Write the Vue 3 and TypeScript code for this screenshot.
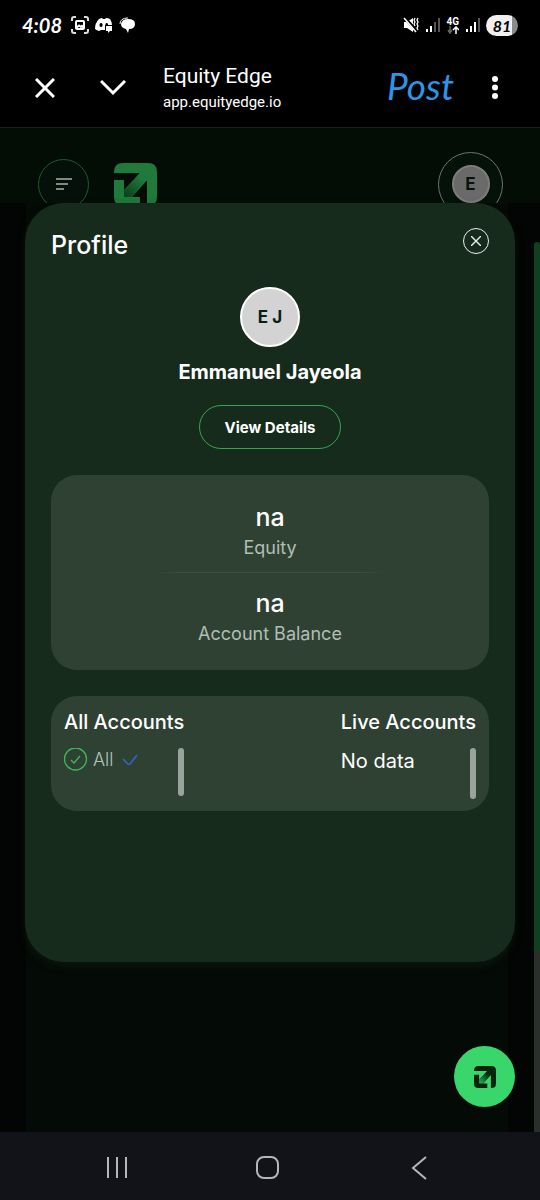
<script setup lang="ts">
interface Stat {
  value: string
  label: string
}

const stats: Stat[] = [
  { value: 'na', label: 'Equity' },
  { value: 'na', label: 'Account Balance' },
]

const logoPath =
  'M0 10V9Q0 0 9 0H34Q43 0 43 9V34Q43 43 34 43H33V17L18 34H26V43H9Q0 43 0 34V17H10V27L26 10Z'
</script>

<template>
  <div class="screen">
    <div class="status">
      <div class="status-group">
        <span class="time">4:08</span>
        <svg width="18" height="18" viewBox="0 0 18 18" fill="none" stroke="#fff" stroke-width="2">
          <path d="M1 5V3Q1 1 3 1H5M13 1H15Q17 1 17 3V5M17 13V15Q17 17 15 17H13M5 17H3Q1 17 1 15V13" stroke="#ddd" />
          <rect x="5" y="5" width="8" height="8" rx="1" />
          <path d="M5 12L8 9.500L10 11L11 10L13 12" />
        </svg>
        <svg width="18" height="16" viewBox="0 0 18 16">
          <path
            fill="#fff"
            d="M4 2Q6 1 7 1L8 2H10L11 1Q13 1 15 2Q17 5 17 8H10V13H6L4 14Q1 13 0 12Q0 6 4 2ZM6 6A1.6 2 0 1 0 6.1 10A1.6 2 0 1 0 6 6ZM11.500 6A1.500 1.500 0 0 0 10.500 8H13A1.500 1.500 0 0 0 11.500 6Z"
          />
          <path fill="#fff" d="M11 9H17V14H15L13 16V14H11Z" />
        </svg>
        <svg width="17" height="16" viewBox="0 0 17 16">
          <path d="M1 7Q1 1 9 1" fill="none" stroke="#fff" stroke-width="1" />
          <path fill="#fff" d="M9 2Q16 2 16 7Q16 12 10 12L9 16L7 12Q2 11 2 7Q3 2 9 2Z" />
        </svg>
      </div>
      <div class="status-group right">
        <svg width="16" height="16" viewBox="0 0 16 16">
          <path d="M1 5H4L10 1V15L4 11H1Z" fill="#fff" />
          <path d="M1 0L14 14" stroke="#000" stroke-width="3" />
          <path d="M1 1L13 15" stroke="#fff" stroke-width="1.500" />
          <path d="M12 1L11 3L12 5L11 7L12 9M15 1L14 3L15 5L14 7L15 9L14 11L15 13" fill="none" stroke="#fff" stroke-width="1.300" />
        </svg>
        <svg width="15" height="16" viewBox="0 0 15 16">
          <path d="M2 12V15M6 9V15" stroke="#fff" stroke-width="2" />
          <path d="M10 5V15M14 1V15" stroke="#555" stroke-width="2" />
        </svg>
        <div class="net">
          <span>4G</span>
          <svg width="12" height="8" viewBox="0 0 12 8" fill="none" stroke-width="1.500">
            <path d="M3 0V7M1 4L3 7L5 4" stroke="#666" />
            <path d="M9 8V1M6 4L9 1L12 4" stroke="#fff" />
          </svg>
        </div>
        <svg width="15" height="16" viewBox="0 0 15 16">
          <path d="M2 12V15M6 9V15M10 5V15" stroke="#fff" stroke-width="2" />
          <path d="M14 1V15" stroke="#555" stroke-width="2" />
        </svg>
        <span class="battery">81</span>
      </div>
    </div>

    <header class="chrome">
      <button class="icon-btn" aria-label="Close">
        <svg width="20" height="20" viewBox="0 0 20 20" fill="none" stroke="#fff" stroke-width="3">
          <path d="M1 1L19 19M19 1L1 19" />
        </svg>
      </button>
      <button class="icon-btn chevron" aria-label="Minimise">
        <svg width="26" height="16" viewBox="0 0 26 16" fill="none" stroke="#fff" stroke-width="3">
          <path d="M1 1L13 13L25 1" />
        </svg>
      </button>
      <div class="site">
        <span class="site-name">Equity Edge</span>
        <span class="site-url">app.equityedge.io</span>
      </div>
      <button class="post">Post</button>
      <button class="icon-btn more" aria-label="More options">
        <svg width="6" height="24" viewBox="0 0 6 24" fill="#fff">
          <circle cx="3" cy="3" r="3" />
          <circle cx="3" cy="11.500" r="3" />
          <circle cx="3" cy="20" r="3" />
        </svg>
      </button>
    </header>

    <main class="page">
      <div class="topbar">
        <button class="menu" aria-label="Menu">
          <svg width="16" height="12" viewBox="0 0 16 12" stroke="#7f8a81" stroke-width="2">
            <path d="M0 1H16M0 6H12M0 11H8" />
          </svg>
        </button>
        <svg class="logo" width="43" height="43" viewBox="0 0 43 43">
          <defs>
            <linearGradient id="lg" gradientUnits="userSpaceOnUse" x1="10" y1="34" x2="28" y2="15">
              <stop offset="0" stop-color="#0c3c1b" />
              <stop offset="1" stop-color="#1f7a3b" />
            </linearGradient>
          </defs>
          <path :d="logoPath" fill="#1f7a3b" />
          <path d="M10 27L26 10L33 17L18 34H10Z" fill="url(#lg)" />
        </svg>
        <div class="account-ring"><span>E</span></div>
      </div>
      <div class="column"></div>
      <div class="scroll"></div>

      <section class="modal" role="dialog" aria-label="Profile">
        <div class="modal-head">
          <h1>Profile</h1>
          <button class="close" aria-label="Close profile">
            <svg width="10" height="10" viewBox="0 0 10 10" stroke="#e8f0ea" stroke-width="1.400">
              <path d="M0 0L10 10M10 0L0 10" />
            </svg>
          </button>
        </div>

        <div class="avatar">E J</div>
        <h2>Emmanuel Jayeola</h2>
        <button class="details">View Details</button>

        <div class="card stats">
          <div v-for="s in stats" :key="s.label" class="stat">
            <strong>{{ s.value }}</strong>
            <span>{{ s.label }}</span>
          </div>
        </div>

        <div class="card accounts">
          <div>
            <h3>All Accounts</h3>
            <div class="list">
              <span class="item">
                <svg width="24" height="24" viewBox="0 0 24 24" fill="none" stroke="#40b65c" stroke-width="1.300">
                  <circle cx="11.500" cy="11" r="11" />
                  <path d="M7 12L10 15L16 8" />
                </svg>
                All
                <svg class="tick" width="16" height="12" viewBox="0 0 16 12" fill="none" stroke="#2c68c4" stroke-width="1.600">
                  <path d="M1 5L6 10Q7 11 8 10L15 1" />
                </svg>
              </span>
              <i class="thumb"></i>
            </div>
          </div>
          <div>
            <h3>Live Accounts</h3>
            <div class="list tall">
              <span class="empty">No data</span>
              <i class="thumb"></i>
            </div>
          </div>
        </div>
      </section>

      <button class="fab" aria-label="Equity Edge assistant">
        <svg width="22" height="22" viewBox="0 0 43 43">
          <defs>
            <linearGradient id="fg" gradientUnits="userSpaceOnUse" x1="10" y1="34" x2="28" y2="15">
              <stop offset="0" stop-color="#2cb457" />
              <stop offset="1" stop-color="#06250e" />
            </linearGradient>
          </defs>
          <path :d="logoPath" fill="#06250e" />
          <path d="M10 27L26 10L33 17L18 34H10Z" fill="url(#fg)" />
        </svg>
      </button>
    </main>

    <nav class="nav">
      <button aria-label="Recent apps">
        <svg width="24" height="24" viewBox="0 0 24 24" stroke="#b6b6ba" stroke-width="2">
          <path d="M4 1V22M13 1V22M22 1V22" />
        </svg>
      </button>
      <button aria-label="Home">
        <svg width="24" height="24" viewBox="0 0 24 24" fill="none" stroke="#b6b6ba" stroke-width="2">
          <rect x="1" y="1" width="21" height="21" rx="7" />
        </svg>
      </button>
      <button aria-label="Back">
        <svg width="24" height="24" viewBox="0 0 24 24" fill="none" stroke="#b6b6ba" stroke-width="2">
          <path d="M19 1L6 12L19 23" />
        </svg>
      </button>
    </nav>
  </div>
</template>

<style>
body {
  margin: 0;
  background: #000;
}
</style>

<style scoped>
* {
  box-sizing: border-box;
}
.screen {
  display: flex;
  flex-direction: column;
  min-height: 100vh;
  background: #000;
  color: #fff;
  font-family: Inter, 'Liberation Sans', sans-serif;
}
button {
  padding: 0;
  border: 0;
  background: none;
  color: inherit;
  font-family: inherit;
  cursor: pointer;
}
svg {
  display: block;
  flex: none;
}
h1,
h2,
h3 {
  margin: 0;
}

.status {
  display: flex;
  justify-content: space-between;
  align-items: center;
  height: 50px;
  padding: 0 22px;
}
.status-group {
  display: flex;
  align-items: center;
  gap: 6px;
}
.time {
  width: 43px;
  font: italic 700 20px/24px Lato, sans-serif;
}
.net {
  display: flex;
  flex-direction: column;
  align-items: center;
  font: 700 10px/9px Roboto, sans-serif;
}
.battery {
  width: 32px;
  border-radius: 11px;
  background: linear-gradient(90deg, #f0f0f0 81%, #8a8a8a 81%);
  color: #000;
  font: italic 700 16px/21px Lato, sans-serif;
  text-align: center;
}

.chrome {
  display: flex;
  align-items: center;
  height: 78px;
  padding: 0 42px 2px 35px;
  border-bottom: 1px solid #1c211f;
}
.icon-btn {
  display: grid;
  place-items: center;
}
.chevron {
  margin-left: 45px;
}
.site {
  display: flex;
  flex: 1;
  flex-direction: column;
  margin-left: 37px;
  padding-top: 2px;
  font-family: Roboto, sans-serif;
}
.site-name {
  font-size: 21px;
  line-height: 26px;
}
.site-url {
  font-size: 15px;
  line-height: 26px;
}
.post {
  padding-bottom: 4px;
  color: #2a96e8;
  font: italic 400 37px/44px Lato, sans-serif;
}
.more {
  margin-left: 38px;
}

.page {
  position: relative;
  display: flex;
  flex: 1;
  flex-direction: column;
  min-height: 860px;
  background: #020503;
}
.topbar {
  display: flex;
  align-items: center;
  height: 75px;
  padding: 37px 37px 0 38px;
  background: #030d06;
}
.menu {
  display: grid;
  place-items: center;
  width: 51px;
  height: 51px;
  border: 1px solid #1e5a30;
  border-radius: 50%;
  background: #06100a;
}
.logo {
  margin-left: 25px;
}
.account-ring {
  display: grid;
  place-items: center;
  width: 65px;
  height: 65px;
  margin-left: auto;
  border: 1px solid #6c756e;
  border-radius: 50%;
  background: #04120a;
}
.account-ring span {
  width: 38px;
  height: 38px;
  border: 2px solid #7d7d7d;
  border-radius: 50%;
  background: #6a6a6a;
  color: #07120b;
  font-size: 17px;
  font-weight: 700;
  line-height: 34px;
  text-align: center;
}
.column {
  flex: 1;
  margin: 0 32px 0 26px;
  background: #040a06;
}
.scroll {
  position: absolute;
  top: 114px;
  right: 0;
  bottom: 0;
  width: 6px;
  border-radius: 3px 3px 0 0;
  background: linear-gradient(#10401f 709px, #2b2f2c 709px);
}

.modal {
  position: absolute;
  top: 75px;
  right: 25px;
  left: 25px;
  display: flex;
  flex-direction: column;
  align-items: center;
  padding: 25px 26px 151px;
  border-radius: 39px;
  background: #172b1c;
  box-shadow: 0 4px 10px #17281c66;
}
.modal-head {
  display: flex;
  justify-content: space-between;
  align-items: flex-start;
  align-self: stretch;
}
h1 {
  font-size: 25px;
  font-weight: 500;
  line-height: 34px;
}
.close {
  display: grid;
  place-items: center;
  width: 26px;
  height: 26px;
  border: 1px solid #e8f0ea;
  border-radius: 50%;
}
.avatar {
  width: 60px;
  height: 60px;
  margin-top: 25px;
  border: 2px solid #fff;
  border-radius: 50%;
  background: #d3d3d3;
  color: #0c1f13;
  font-size: 17px;
  font-weight: 700;
  line-height: 56px;
  text-align: center;
}
h2 {
  margin-top: 12px;
  font-size: 20px;
  font-weight: 700;
  line-height: 26px;
}
.details {
  height: 44px;
  margin-top: 20px;
  padding: 0 25px;
  border: 1px solid #35a553;
  border-radius: 22px;
  font-size: 15px;
  font-weight: 700;
}
.card {
  align-self: stretch;
  margin-top: 26px;
  border-radius: 26px;
  background: #2f4133;
}
.stats {
  padding: 26px 0 24px;
}
.stat {
  display: flex;
  flex-direction: column;
  align-items: center;
  gap: 3px;
}
.stat + .stat::before {
  width: 230px;
  height: 1px;
  margin: 12px 0 11px;
  background: linear-gradient(90deg, transparent, #3b4d3f 10%, #3b4d3f 90%, transparent);
  content: '';
}
.stat strong {
  font-size: 25px;
  font-weight: 500;
  line-height: 32px;
}
.stat span {
  color: #b0beb3;
  font-size: 18px;
  font-weight: 400;
  line-height: 24px;
}
.accounts {
  display: flex;
  justify-content: space-between;
  padding: 13px 13px 12px;
}
h3 {
  font-size: 20px;
  font-weight: 500;
  line-height: 26px;
}
.list {
  display: flex;
  justify-content: space-between;
  align-items: flex-start;
  height: 48px;
  margin-top: 13px;
}
.list.tall {
  height: 51px;
}
.item {
  display: flex;
  align-items: center;
  gap: 5px;
  color: #b5c2b8;
  font-size: 18px;
  font-weight: 300;
  line-height: 24px;
}
.tick {
  margin-left: 3px;
}
.empty {
  font-size: 20px;
  line-height: 26px;
}
.thumb {
  align-self: stretch;
  width: 6px;
  border-radius: 3px;
  background: #98a49b;
}

.fab {
  position: absolute;
  right: 25px;
  bottom: 25px;
  display: grid;
  place-items: center;
  width: 61px;
  height: 61px;
  border-radius: 50%;
  background: #39d66c;
}
.nav {
  display: flex;
  justify-content: space-between;
  align-items: center;
  height: 68px;
  padding: 4px 97px 0 92px;
  background: #121319;
}
.nav button {
  display: grid;
  place-items: center;
  width: 48px;
  height: 48px;
}
</style>
